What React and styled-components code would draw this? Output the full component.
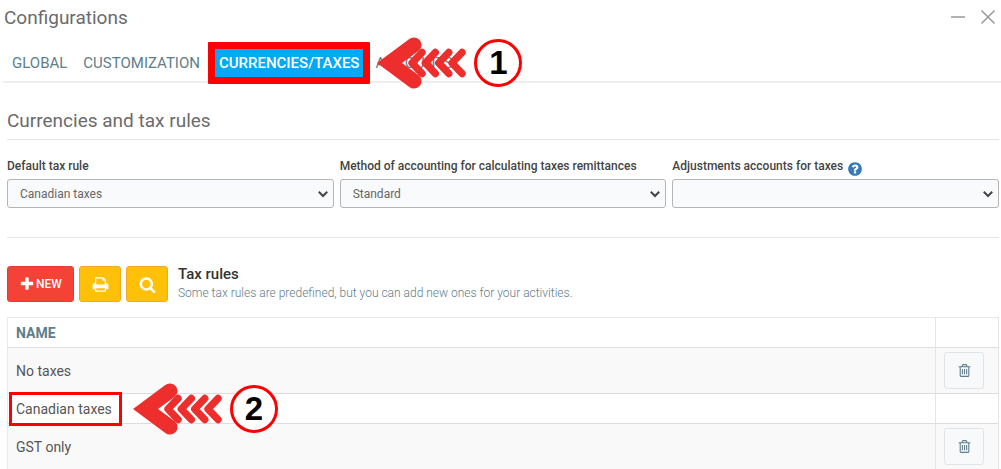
import styled, { createGlobalStyle } from "styled-components";

const GlobalStyle = createGlobalStyle`
  * {
    box-sizing: border-box;
  }
  body {
    margin: 0;
    background-color: white;
    color: #555;
    font-family: Roboto, "Liberation Sans", sans-serif;
    font-size: 14px;
  }
  button, select {
    font-family: inherit;
  }
`;

const Window = styled.div`
  width: 100%;
`;

const TitleBar = styled.header`
  display: flex;
  align-items: center;
  justify-content: space-between;
  height: 36px;
  padding: 0 5px 2px 4px;
`;

const WindowTitle = styled.h1`
  margin: 0;
  font-size: 19px;
  font-weight: 400;
  color: #6b6b6b;
`;

const WindowControls = styled.div`
  display: flex;
  gap: 14px;
`;

const ControlButton = styled.button`
  display: flex;
  padding: 0;
  border: none;
  background: none;
  color: #999;
  cursor: pointer;
`;

const Tabs = styled.nav`
  display: flex;
  align-items: center;
  height: 47px;
  margin-left: 3px;
  padding: 8px 0 0 1px;
  border-bottom: 2px solid #eee;
`;

const Tab = styled.button`
  position: relative;
  height: 42px;
  margin-right: ${({ $active }) => ($active ? "-3px" : "0")};
  padding: 0 ${({ $active }) => ($active ? "4px" : "8px")};
  border: ${({ $active }) => ($active ? "7px solid #ff0000" : "none")};
  border-radius: 1px;
  background-color: ${({ $active }) => ($active ? "#03a9f4" : "transparent")};
  color: ${({ $active }) => ($active ? "white" : "#607d8b")};
  font-size: 15px;
  font-weight: ${({ $active }) => ($active ? 500 : 400)};
  cursor: pointer;
`;

const Callout = styled.div`
  position: absolute;
  top: 50%;
  left: 100%;
  z-index: 1;
  display: flex;
  align-items: center;
  gap: 7px;
  margin-left: 14px;
  transform: translateY(-50%);
  pointer-events: none;
`;

const StepNumber = styled.span`
  display: flex;
  align-items: center;
  justify-content: center;
  width: 48px;
  height: 48px;
  border: 3px solid #ff0000;
  border-radius: 50%;
  background-color: white;
  color: black;
  font-family: "Liberation Sans", Arial, sans-serif;
  font-size: 33px;
  font-weight: 700;
  line-height: 42px;
`;

const Content = styled.main`
  padding: 0 2px 0 7px;
`;

const SectionTitle = styled.h2`
  display: flex;
  align-items: flex-end;
  height: 57px;
  margin: 0 0 18px;
  padding-bottom: 6px;
  border-bottom: 1px solid #e5e5e5;
  font-size: 19px;
  font-weight: 400;
  line-height: 24px;
  color: #6b6b6b;
`;

const Fields = styled.div`
  display: grid;
  grid-template-columns: repeat(3, 1fr);
  gap: 6px;
  padding-bottom: 29px;
  border-bottom: 1px solid #e5e5e5;
`;

const Field = styled.div`
  display: flex;
  flex-direction: column;
`;

const LabelRow = styled.div`
  display: flex;
  align-items: center;
  gap: 4px;
  height: 21px;
`;

const Label = styled.label`
  font-size: 12px;
  font-weight: 500;
  line-height: 15px;
  padding-bottom: 4px;
  color: #444;
`;

const HelpButton = styled.button`
  display: flex;
  padding: 0;
  border: none;
  background: none;
  color: #337ab7;
  cursor: pointer;
`;

const SelectBox = styled.div`
  position: relative;

  > svg {
    position: absolute;
    top: 11px;
    right: 5px;
    pointer-events: none;
  }
`;

const Select = styled.select`
  width: 100%;
  height: 29px;
  padding: 0 24px 0 12px;
  appearance: none;
  border: 1px solid #b5b5b5;
  border-radius: 3px;
  background-color: #f9fafc;
  color: #666;
  font-size: 12px;
`;

const Toolbar = styled.div`
  display: flex;
  align-items: center;
  gap: 5px;
  padding: 27px 0 14px;
`;

const ToolButton = styled.button`
  display: flex;
  align-items: center;
  justify-content: center;
  gap: 1px;
  height: 36px;
  width: ${({ $primary }) => ($primary ? "67px" : "42px")};
  padding: 0;
  border: 1px solid ${({ $primary }) => ($primary ? "#e53c32" : "#f5a623")};
  border-radius: 3px;
  background-color: ${({ $primary }) => ($primary ? "#f44336" : "#ffc107")};
  color: white;
  font-size: 12px;
  font-weight: 500;
  cursor: pointer;
`;

const ToolbarText = styled.div`
  margin-left: 5px;
`;

const ToolbarTitle = styled.h3`
  margin: 0;
  font-size: 15px;
  font-weight: 500;
  line-height: 18px;
  color: #333;
`;

const ToolbarHint = styled.p`
  margin: 0;
  font-size: 12px;
  font-weight: 300;
  line-height: 20px;
  color: #607d8b;
`;

const Table = styled.table`
  width: 100%;
  border-collapse: collapse;
  border: 1px solid #e5ebee;
`;

const HeadCell = styled.th`
  height: 30px;
  padding: 0 8px;
  border-right: 1px solid #e5e5e5;
  text-align: left;
  font-size: 14px;
  font-weight: 700;
  color: #607d8b;
`;

const Row = styled.tr`
  border-top: 1px solid #ddd;

  &:nth-child(odd) {
    background-color: #f9f9f9;
  }
`;

const Cell = styled.td`
  height: 30px;
  padding: 0 8px;
  border-right: 1px solid #e5e5e5;
  color: #555;
`;

const ActionCell = styled(Cell)`
  width: 63px;
  padding: ${({ $filled }) => ($filled ? "4px 8px" : "0 8px")};
`;

const MarkedName = styled.span`
  position: relative;
  display: inline-block;
  margin: -4px -7px;
  padding: 6px 7px 6px 4px;
  border: 3px solid #ff0000;
  line-height: 16px;
`;

const DeleteButton = styled.button`
  display: flex;
  align-items: center;
  justify-content: center;
  width: 40px;
  height: 37px;
  padding: 0;
  border: 1px solid #dfe5e8;
  border-radius: 3px;
  background-color: #f7f9fb;
  color: #607d8b;
  cursor: pointer;
`;

const icons = {
  plus: "M1600 736v192q0 40-28 68t-68 28h-416v416q0 40-28 68t-68 28h-192q-40 0-68-28t-28-68v-416h-416q-40 0-68-28t-28-68v-192q0-40 28-68t68-28h416v-416q0-40 28-68t68-28h192q40 0 68 28t28 68v416h416q40 0 68 28t28 68z",
  print:
    "M448 1536h896v-256h-896v256zm0-640h896v-384h-160q-40 0-68-28t-28-68v-160h-640v640zm1152 64q0-26-19-45t-45-19-45 19-19 45 19 45 45 19 45-19 19-45zm128 0v416q0 13-9.5 22.5t-22.5 9.5h-224v160q0 40-28 68t-68 28h-960q-40 0-68-28t-28-68v-160h-224q-13 0-22.5-9.5t-9.5-22.5v-416q0-79 56.5-135.5t135.5-56.5h64v-544q0-40 28-68t68-28h672q40 0 88 20t76 48l152 152q28 28 48 76t20 88v256h64q79 0 135.5 56.5t56.5 135.5z",
  search:
    "M1216 832q0-185-131.5-316.5t-316.5-131.5-316.5 131.5-131.5 316.5 131.5 316.5 316.5 131.5 316.5-131.5 131.5-316.5zm512 832q0 52-38 90t-90 38q-54 0-90-38l-343-342q-179 124-399 124-143 0-273.5-55.5t-225-150-150-225-55.5-273.5 55.5-273.5 150-225 225-150 273.5-55.5 273.5 55.5 225 150 150 225 55.5 273.5q0 220-124 399l343 343q37 37 37 90z",
  trash:
    "M704 736v576q0 14-9 23t-23 9h-64q-14 0-23-9t-9-23v-576q0-14 9-23t23-9h64q14 0 23 9t9 23zm256 0v576q0 14-9 23t-23 9h-64q-14 0-23-9t-9-23v-576q0-14 9-23t23-9h64q14 0 23 9t9 23zm256 0v576q0 14-9 23t-23 9h-64q-14 0-23-9t-9-23v-576q0-14 9-23t23-9h64q14 0 23 9t9 23zm128 724v-948h-896v948q0 22 7 40.5t14.5 27 10.5 8.5h832q3 0 10.5-8.5t14.5-27 7-40.5zm-672-1076h448l-48-117q-7-9-17-11h-317q-10 2-17 11zm928 32v64q0 14-9 23t-23 9h-96v948q0 83-47 143.5t-113 60.5h-832q-66 0-113-58.5t-47-141.5v-952h-96q-14 0-23-9t-9-23v-64q0-14 9-23t23-9h309l70-167q15-37 54-63t79-26h320q40 0 79 26t54 63l70 167h309q14 0 23 9t9 23z",
  help: "M1024 1376v-192q0-14-9-23t-23-9h-192q-14 0-23 9t-9 23v192q0 14 9 23t23 9h192q14 0 23-9t9-23zm256-672q0-88-55.5-163t-138.5-116-170-41q-243 0-371 213-15 24 8 42l132 100q7 6 19 6 16 0 25-12 53-68 86-92 34-24 86-24 48 0 85.5 26t37.5 59q0 38-20 61t-68 45q-63 28-115.5 86.5t-52.5 125.5v36q0 14 9 23t23 9h192q14 0 23-9t9-23q0-19 21.5-49.5t54.5-49.5q32-18 49-28.5t46-35 44.5-48 28-60.5 12.5-81zm384 192q0 209-103 385.5t-279.5 279.5-385.5 103-385.5-103-279.5-279.5-103-385.5 103-385.5 279.5-279.5 385.5-103 385.5 103 279.5 279.5 103 385.5z",
};

const Icon = ({ name, size = 16 }) => (
  <svg width={size} height={size} viewBox="0 0 1792 1792" aria-hidden="true">
    <path fill="currentColor" d={icons[name]} />
  </svg>
);

const Chevron = () => (
  <svg width="12" height="8" viewBox="0 0 12 8" aria-hidden="true">
    <path d="M1.8 1.8 L6 6 L10.2 1.8" fill="none" stroke="#444" strokeWidth="2" />
  </svg>
);

const Arrow = () => (
  <svg width="90" height="52" viewBox="0 0 90 52" aria-hidden="true">
    <path
      fill="#ee2d2d"
      d="M0 26 L32 2.300 A7.500 7.500 0 0 1 42 13.500 L25 26 L42 38.500 A7.500 7.500 0 0 1 32 49.700 Z"
    />
    <g
      fill="none"
      stroke="#ee2d2d"
      strokeWidth="7.400"
      strokeLinecap="round"
      strokeLinejoin="round"
    >
      {[45, 58.3, 71.7, 85].map((x) => (
        <path key={x} d={`M${x} 15.500 L${x - 10} 26 L${x} 36.500`} />
      ))}
    </g>
  </svg>
);

const Step = ({ number }) => (
  <Callout>
    <Arrow />
    <StepNumber>{number}</StepNumber>
  </Callout>
);

const tabs = ["GLOBAL", "CUSTOMIZATION", "CURRENCIES/TAXES", "ACCOUNTS"];

const fields = [
  { id: "rule", label: "Default tax rule", value: "Canadian taxes" },
  {
    id: "method",
    label: "Method of accounting for calculating taxes remittances",
    value: "Standard",
  },
  {
    id: "accounts",
    label: "Adjustments accounts for taxes",
    value: "",
    help: true,
  },
];

const rules = [
  { name: "No taxes", removable: true },
  { name: "Canadian taxes", marked: true },
  { name: "GST only", removable: true },
];

const App = () => {
  return (
    <Window>
      <GlobalStyle />
      <TitleBar>
        <WindowTitle>Configurations</WindowTitle>
        <WindowControls>
          <ControlButton aria-label="Minimize">
            <svg width="16" height="16" viewBox="0 0 16 16">
              <path d="M1 8 H15" stroke="currentColor" strokeWidth="1.500" />
            </svg>
          </ControlButton>
          <ControlButton aria-label="Close">
            <svg width="16" height="16" viewBox="0 0 16 16">
              <path
                d="M1.500 1.500 L14.500 14.500 M14.500 1.500 L1.500 14.500"
                stroke="currentColor"
                strokeWidth="1.500"
              />
            </svg>
          </ControlButton>
        </WindowControls>
      </TitleBar>
      <Tabs>
        {tabs.map((tab) => {
          const active = tab === "CURRENCIES/TAXES";
          return (
            <Tab key={tab} $active={active}>
              {tab}
              {active && <Step number={1} />}
            </Tab>
          );
        })}
      </Tabs>
      <Content>
        <SectionTitle>Currencies and tax rules</SectionTitle>
        <Fields>
          {fields.map((field) => (
            <Field key={field.id}>
              <LabelRow>
                <Label htmlFor={field.id}>{field.label}</Label>
                {field.help && (
                  <HelpButton aria-label="Help">
                    <Icon name="help" />
                  </HelpButton>
                )}
              </LabelRow>
              <SelectBox>
                <Select id={field.id} defaultValue={field.value}>
                  <option>{field.value}</option>
                </Select>
                <Chevron />
              </SelectBox>
            </Field>
          ))}
        </Fields>
        <Toolbar>
          <ToolButton $primary>
            <Icon name="plus" />
            NEW
          </ToolButton>
          <ToolButton aria-label="Print">
            <Icon name="print" size={17} />
          </ToolButton>
          <ToolButton aria-label="Search">
            <Icon name="search" size={17} />
          </ToolButton>
          <ToolbarText>
            <ToolbarTitle>Tax rules</ToolbarTitle>
            <ToolbarHint>
              Some tax rules are predefined, but you can add new ones for your
              activities.
            </ToolbarHint>
          </ToolbarText>
        </Toolbar>
        <Table>
          <thead>
            <tr>
              <HeadCell>NAME</HeadCell>
              <HeadCell />
            </tr>
          </thead>
          <tbody>
            {rules.map((rule) => (
              <Row key={rule.name}>
                <Cell>
                  {rule.marked ? (
                    <MarkedName>
                      {rule.name}
                      <Step number={2} />
                    </MarkedName>
                  ) : (
                    rule.name
                  )}
                </Cell>
                <ActionCell $filled={rule.removable}>
                  {rule.removable && (
                    <DeleteButton aria-label={`Delete ${rule.name}`}>
                      <Icon name="trash" size={15} />
                    </DeleteButton>
                  )}
                </ActionCell>
              </Row>
            ))}
          </tbody>
        </Table>
      </Content>
    </Window>
  );
};

export default App;
